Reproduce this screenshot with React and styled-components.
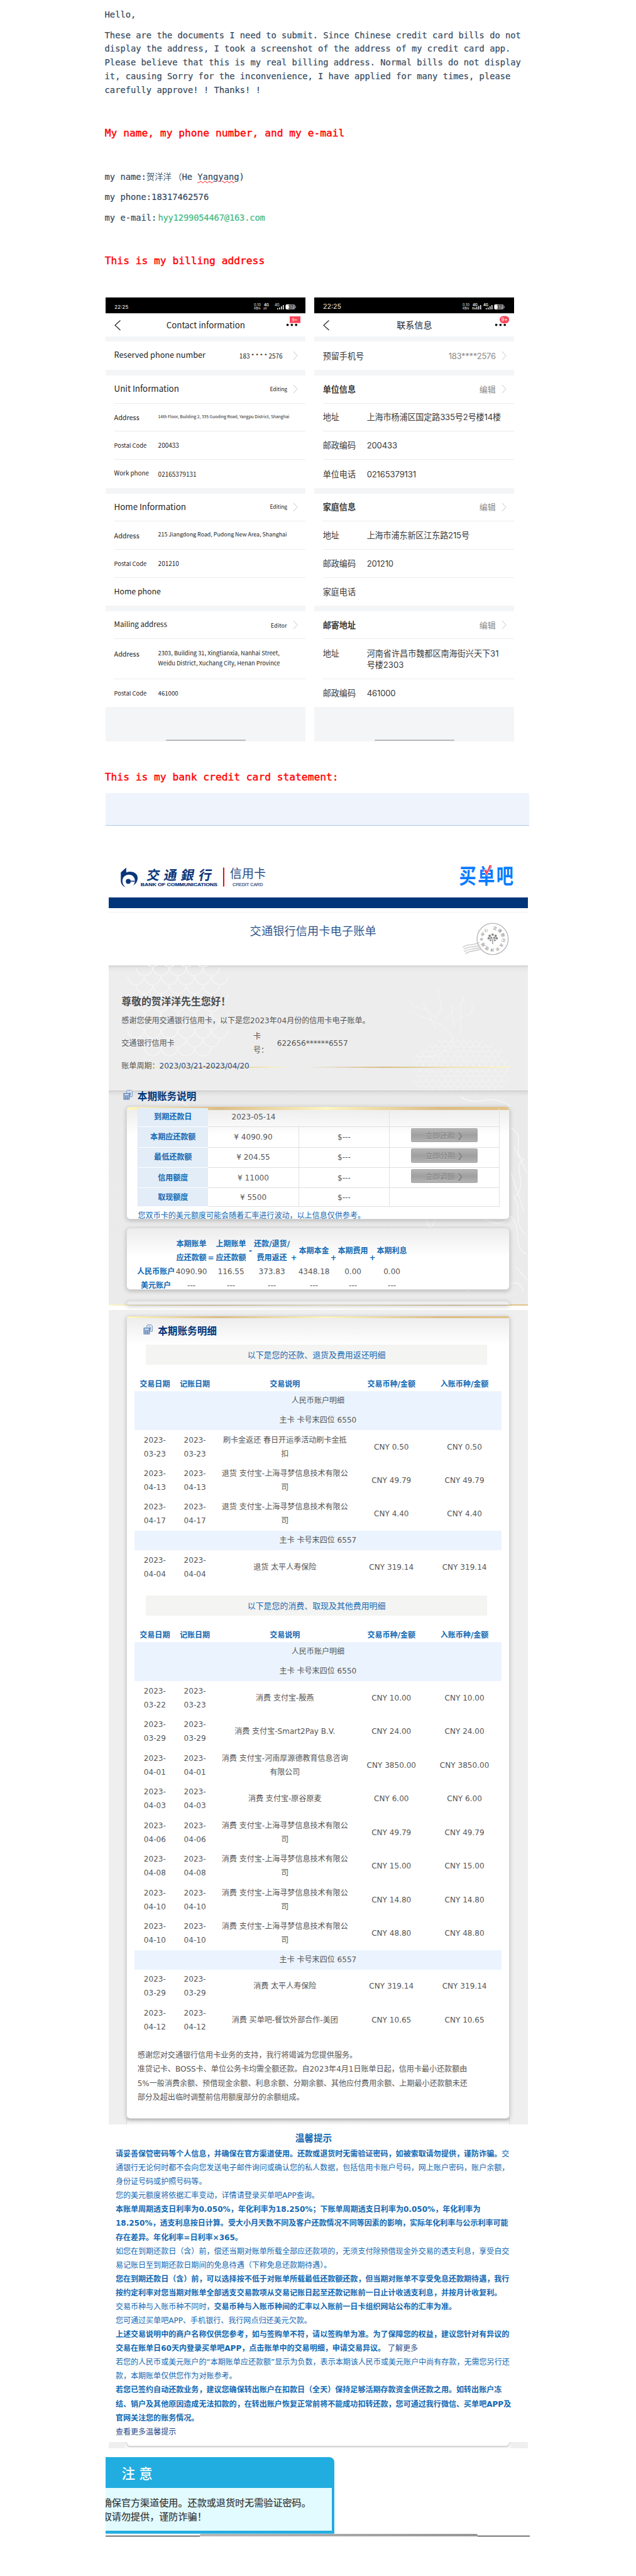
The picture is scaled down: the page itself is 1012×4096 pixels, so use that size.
import React from "react";
import styled, { createGlobalStyle } from "styled-components";

const mono = `"DejaVu Sans Mono", "Noto Sans CJK SC", monospace`;
const sc = `"Noto Sans CJK SC", sans-serif`;
const inter = `Inter, "Noto Sans CJK SC", sans-serif`;
const bankFont = `"DejaVu Sans", "Noto Sans CJK SC", sans-serif`;
const gold = "linear-gradient(90deg,#fdf6c4 0%,#dcbc84 24%,#fbf4c3 52%,#dcbc84 82%,#e3c488 100%)";

const Global = createGlobalStyle`
  * { box-sizing: border-box; }
  body { margin: 0; background: #fff; }
`;

const Page = styled.main`
  width: 1012px;
  height: 4096px;
  overflow: hidden;
  background: #fff;
  padding-top: 12.9px;
`;

/* ---------- letter ---------- */
const Letter = styled.p`
  margin: ${(p) => p.$gap || 0}px 0 0 166.6px;
  font: 13.75px/21.8px ${mono};
  color: #34495e;
  white-space: pre;
  -webkit-text-stroke: 0.2px #34495e;
`;
const Heading = styled.h2`
  margin: ${(p) => p.$gap}px 0 0 166.8px;
  font: 16.25px/24px ${mono};
  color: #ff0000;
  white-space: pre;
  -webkit-text-stroke: 0.4px #ff0000;
`;
const Hanzi = styled.span`
  font-family: ${sc};
  font-size: 13.4px;
  font-weight: 350;
  -webkit-text-stroke: 0;
`;
const Misspelt = styled.span`
  text-decoration: underline wavy #f00 1px;
  text-underline-offset: 1px;
`;
const Mail = styled.span`
  margin-left: 2px;
  color: #42b983;
  letter-spacing: -0.17px;
  -webkit-text-stroke: 0.2px #42b983;
`;

/* ---------- phones ---------- */
const Phones = styled.div`
  display: flex;
  gap: 14.3px;
  margin: 45.9px 0 0 168.4px;
`;
const Phone = styled.section`
  width: 317.8px;
  height: 706.4px;
  background: #fff;
  color: ${(p) => (p.$cn ? "#3a3a3a" : "#1c1c1c")};
  font-family: ${(p) => (p.$cn ? inter : sc)};
`;
const StatusBar = styled.div`
  height: 24.6px;
  background: #000;
  color: #eee;
  display: flex;
  align-items: center;
  justify-content: space-between;
  padding: 6px 14px 0 13.5px;
  font: ${(p) => p.$size}px/14px Inter, sans-serif;
`;
const StatusIcons = styled.div`
  display: flex;
  align-items: center;
  svg { display: block; }
`;
const NavBar = styled.div`
  height: 37.4px;
  display: grid;
  grid-template-columns: 60px 1fr 60px;
  align-items: center;
  justify-items: center;
  border-top: 0.6px solid #ddd;
`;
const NavTitle = styled.div`
  font-size: ${(p) => p.$size}px;
  line-height: 20px;
  color: #222;
  white-space: nowrap;
`;
const NavIcon = styled.svg`
  justify-self: ${(p) => p.$side};
  display: block;
`;
const Gap = styled.div`
  height: ${(p) => p.$h}px;
  background: #f4f5f7;
  display: flex;
  align-items: flex-end;
  justify-content: center;
`;
const HomeBar = styled.div`
  width: 127px;
  height: 2.8px;
  margin-bottom: 0.7px;
  border-radius: 2px;
  background: #bababa;
`;
const Row = styled.div`
  height: ${(p) => p.$h}px;
  margin-left: 13.2px;
  border-bottom: ${(p) => (p.$line ? "1px solid #ececec" : "0")};
  display: flex;
  align-items: ${(p) => (p.$top ? "flex-start" : "center")};
  padding: ${(p) => (p.$top ? 9.5 : 0)}px 12.6px 0 0;
`;
const Label = styled.div`
  font-size: ${(p) => p.$size}px;
  font-weight: ${(p) => (p.$bold ? 700 : 400)};
  line-height: 18px;
  margin-top: ${(p) => p.$dy || 0}px;
  width: ${(p) => (p.$wide ? "auto" : "70px")};
  flex: ${(p) => (p.$wide ? 1 : "none")};
  white-space: nowrap;
`;
const Value = styled.div`
  font-size: ${(p) => p.$size}px;
  line-height: ${(p) => p.$lh || 18}px;
  margin-top: ${(p) => p.$dy || 0}px;
  letter-spacing: ${(p) => p.$ls || 0}px;
  white-space: pre;
`;
const Action = styled(Value)`
  color: ${(p) => (p.$cn ? "#8a8a8a" : "#1c1c1c")};
  margin-right: ${(p) => p.$mr}px;
`;

const Chevron = () => (
  <svg width="8" height="15" viewBox="0 0 8 15" fill="none" stroke="#c4c4c4" strokeWidth="1">
    <path d="M1 1L7 7.5L1 14" />
  </svg>
);

const Status = ({ cn }) => (
  <StatusBar $size={cn ? 10.6 : 8.2}>
    <span>22:25</span>
    <StatusIcons>
      <svg width="68" height="14" viewBox="0 0 68 14" fill="#e8e8e8" fontFamily="Inter, sans-serif">
        <text x="0" y="5.5" fontSize="5.6" textLength="11">0.10</text>
        <text x="0" y="11" fontSize="5" textLength="10.5">KB/s</text>
        <text x="16" y="5.8" fontSize="5.6" fontWeight="700">4G</text>
        {cn ? (
          <g>
            <rect x="16" y="7" width="1.4" height="4" /><rect x="19" y="8" width="1.6" height="3" />
            <rect x="22" y="7" width="1.6" height="4" /><rect x="25" y="5.5" width="1.6" height="5.5" />
            <rect x="28" y="4" width="1.6" height="7" />
          </g>
        ) : (
          <text x="15" y="11" fontSize="5">oll</text>
        )}
        <text x="33" y="5.8" fontSize="5.6" fontWeight={cn ? 700 : 400}>4G</text>
        <rect x="37" y="9" width="1.6" height="2" /><rect x="40" y="8" width="1.6" height="3" />
        <rect x="43" y="6" width="1.6" height="5" /><rect x="46" y="4" width="1.6" height="7" />
        <rect x="50.5" y="3" width="15" height="8" rx="2" fill="#8c8c8c" />
        <path d="M52.5 3H56V11H52.5Q50.5 11 50.5 9V5Q50.5 3 52.5 3Z" fill="#fff" />
        <rect x="66" y="5.2" width="1" height="3.6" rx=".5" fill="#8c8c8c" />
        <text x="54" y="9.6" fontSize="7" fontWeight="600" fill="#333">37</text>
      </svg>
    </StatusIcons>
  </StatusBar>
);

const Nav = ({ cn, title, size }) => (
  <NavBar>
    <NavIcon $side="start" width="25" height="20" viewBox="0 0 25 20" fill="none" stroke="#222" strokeWidth="1.2">
      <path d="M23.5 2.5L15 10.2L23.5 18" />
    </NavIcon>
    <NavTitle $size={size}>{title}</NavTitle>
    <NavIcon $side="end" width="32" height="32" viewBox="0 0 32 32">
      <g fill="#111">
        <circle cx="3.6" cy="15.6" r="1.9" /><circle cx="10.4" cy="15.6" r="1.9" /><circle cx="17.2" cy="15.6" r="1.9" />
      </g>
      {cn ? <rect x="9" y="1.6" width="15.2" height="11.4" rx="5.7" fill="#fb4459" /> : <rect x="7" y="2" width="17" height="10.6" fill="#fb4459" />}
      <text x={cn ? 11.6 : 10.6} y="9.8" fontSize={cn ? 8 : 6.6} fill="#fff" fontFamily="Inter, sans-serif">9+</text>
    </NavIcon>
  </NavBar>
);

const EnglishPhone = () => (
  <Phone>
    <Status />
    <Nav title="Contact information" size={13.3} />
    <Gap $h={8.6} />
    <Row $h={44.6}>
      <Label $wide $size={12.7} $dy={-3}>Reserved phone number</Label>
      <Action $size={10} $mr={16}>183 * * * * 2576</Action><Chevron />
    </Row>
    <Gap $h={9} />
    <Row $h={44.6} $line>
      <Label $wide $size={13.3} $dy={-1}>Unit Information</Label>
      <Action $size={8.4} $dy={-2} $mr={8.5}>Editing</Action><Chevron />
    </Row>
    <Row $h={44.6} $line><Label $size={10.8} $dy={-1}>Address</Label><Value $size={6.7} $dy={-3}>14th Floor, Building 2, 335 Guoding Road, Yangpu District, Shanghai</Value></Row>
    <Row $h={45} $line><Label $size={9.4}>Postal Code</Label><Value $size={10}>200433</Value></Row>
    <Row $h={44.9}><Label $size={9.8} $dy={-4}>Work phone</Label><Value $size={10}>02165379131</Value></Row>
    <Gap $h={8.7} />
    <Row $h={44.3} $line>
      <Label $wide $size={13.3} $dy={-1}>Home Information</Label>
      <Action $size={8.4} $dy={-2} $mr={8.5}>Editing</Action><Chevron />
    </Row>
    <Row $h={45.2} $line><Label $size={10.8}>Address</Label><Value $size={8.9} $dy={-2}>215 Jiangdong Road, Pudong New Area, Shanghai</Value></Row>
    <Row $h={44.9} $line><Label $size={9.4}>Postal Code</Label><Value $size={10}>201210</Value></Row>
    <Row $h={43.7}><Label $size={12.3} $dy={-3}>Home phone</Label></Row>
    <Gap $h={9.2} />
    <Row $h={44.3} $line>
      <Label $wide $size={11.6} $dy={-4}>Mailing address</Label>
      <Action $size={9.1} $mr={9}>Editor</Action><Chevron />
    </Row>
    <Row $h={63.8} $line $top>
      <Label $size={10.8} $dy={4}>Address</Label>
      <Value $size={9.3} $lh={15.7} $dy={5}>{"2303, Building 31, Xingtianxia, Nanhai Street,\nWeidu District, Xuchang City, Henan Province"}</Value>
    </Row>
    <Row $h={44.3}><Label $size={9.4}>Postal Code</Label><Value $size={9.6}>461000</Value></Row>
    <Gap $h={54.7}><HomeBar /></Gap>
  </Phone>
);

const ChineseRow = ({ h, label, value, line }) => (
  <Row $h={h} $line={line}><Label $size={13.1}>{label}</Label><Value $size={13.1} $ls={-0.15}>{value}</Value></Row>
);
const ChineseHead = ({ h, label }) => (
  <Row $h={h} $line>
    <Label $wide $bold $size={13.1}>{label}</Label>
    <Action $cn $size={13} $mr={9}>编辑</Action><Chevron />
  </Row>
);

const ChinesePhone = () => (
  <Phone $cn>
    <Status cn />
    <Nav cn title="联系信息" size={14.1} />
    <Gap $h={8.6} />
    <Row $h={44.6}>
      <Label $wide $size={13.1}>预留手机号</Label>
      <Action $cn $size={13} $ls={-0.3} $mr={9}>183****2576</Action><Chevron />
    </Row>
    <Gap $h={9} />
    <ChineseHead h={44.6} label="单位信息" />
    <ChineseRow h={44.6} line label="地址" value="上海市杨浦区国定路335号2号楼14楼" />
    <ChineseRow h={45} line label="邮政编码" value="200433" />
    <ChineseRow h={44.9} label="单位电话" value="02165379131" />
    <Gap $h={8.7} />
    <ChineseHead h={44.3} label="家庭信息" />
    <ChineseRow h={45.2} line label="地址" value="上海市浦东新区江东路215号" />
    <ChineseRow h={44.9} line label="邮政编码" value="201210" />
    <ChineseRow h={43.7} label="家庭电话" />
    <Gap $h={9.2} />
    <ChineseHead h={44.3} label="邮寄地址" />
    <Row $h={63.8} $line $top>
      <Label $size={13.1} $dy={4}>地址</Label>
      <Value $size={13.1} $lh={18.6} $dy={3.7}>{"河南省许昌市魏都区南海街兴天下31\n号楼2303"}</Value>
    </Row>
    <ChineseRow h={44.3} label="邮政编码" value="461000" />
    <Gap $h={54.7}><HomeBar /></Gap>
  </Phone>
);

/* ---------- statement ---------- */
const BlueStrip = styled.div`
  margin: 13.1px 0 0 168.4px;
  width: 674px;
  height: 51.4px;
  background: #eff4fc;
  border-bottom: 1px solid #a9cbeb;
`;
const Statement = styled.article`
  margin-left: 172.8px;
  width: 667.6px;
  font: 12.05px/22px ${bankFont};
  color: #555;
`;
const LogoBar = styled.header`
  height: 114.2px;
  display: flex;
  justify-content: space-between;
  padding: 50.3px 22.4px 0 11.7px;
`;
const BankMark = styled.svg`
  margin-top: 10.3px;
`;
const BlueBar = styled.div`
  height: 16.6px;
  background: #00357a;
`;
const HairGap = styled.div`
  height: 7.2px;
  border-bottom: 1.4px solid #f0f0f0;
`;
const TitleRow = styled.div`
  height: 83.8px;
  display: flex;
  justify-content: space-between;
`;
const Title = styled.h1`
  margin: 17.5px 0 0 224.8px;
  font: 18.2px/23px ${sc};
  letter-spacing: 0.1px;
  font-weight: 350;
  color: #1e4a86;
`;
const Stamp = styled.svg`
  margin: 15.5px 28.8px 0 0;
`;
const Greeting = styled.section`
  position: relative;
  height: 199.5px;
  padding: 45.7px 0 0 20.5px;
  background: linear-gradient(#d2d2d2 0, #e6e6e6 4px, #ededed 11px);
`;
const Watermark = styled.svg`
  position: absolute;
  left: 0;
  top: 0;
  pointer-events: none;
`;
const GoldRule = styled.div`
  position: absolute;
  left: 20px;
  right: 29px;
  top: 161px;
  height: 2.6px;
  display: flex;
  gap: 22px;
  &::before, &::after {
    content: "";
    flex: 264;
    background: linear-gradient(90deg, #f7f0c600, #f5eec2 20%, #dcc088 55%, #f5eec2 88%, #f7f0c600);
  }
  &::after { flex: 310; background: linear-gradient(90deg, #f7f0c600, #d9bb80 38%, #f0e2ae 70%, #fbf5c6); }
`;
const Dear = styled.h2`
  position: relative;
  margin: 0;
  font: 700 15.8px/24px ${sc};
  color: #4c4c4c;
`;
const Line = styled.div`
  position: relative;
  display: flex;
  align-items: center;
  height: ${(p) => p.$h || 22}px;
  margin-top: ${(p) => p.$gap}px;
  white-space: nowrap;
`;
const CardName = styled.span`
  width: 209.6px;
`;
const CardLabel = styled.span`
  width: 37.9px;
  white-space: pre;
`;
const Period = styled.span`
  color: #1f4a8a;
`;

const Overview = styled.section`
  position: relative;
  height: 339.9px;
  padding-left: 29.4px;
  background: linear-gradient(#c6c6c6 0, #dcdcdc 2px, #eaeaea 9px, #ebebeb);
`;
const SectionTitle = styled.h3`
  position: relative;
  display: flex;
  align-items: center;
  gap: 8px;
  height: 22px;
  margin: 0 0 0 ${(p) => p.$left}px;
  font: 700 15.6px/22px ${sc};
  color: #00357a;
  top: ${(p) => p.$shift || 0}px;
`;
const Card = styled.div`
  position: relative;
  width: 607.9px;
  height: ${(p) => p.$h}px;
  margin-top: ${(p) => p.$gap}px;
  border-radius: ${(p) => (p.$open ? "5px 5px 0 0" : "5px")};
  background: linear-gradient(#ececec, #fff ${(p) => p.$fade || 45}px);
  box-shadow: 0 0 0 1px #d9d9d9, 0 2px 7px 1px rgba(0, 0, 0, 0.22);
  overflow: hidden;
`;
const GoldStrip = styled.div`
  height: ${(p) => p.$h}px;
  background: ${gold};
`;
const Quota = styled.div`
  display: grid;
  grid-template-columns: 111.1px 145.4px 143.6px 174.8px;
  grid-template-rows: 30.2px 32.5px 32.7px 31.7px 30.5px;
  margin: -2.8px 0 0 16.5px;
  width: 575px;
  border-left: 1px solid #dfe6ee;
`;
const QuotaName = styled.div`
  background: #e2edf8;
  color: #1168b3;
  font-weight: 700;
  display: grid;
  place-items: center;
  border-bottom: 1px solid #fff;
`;
const QuotaCell = styled.div`
  display: grid;
  place-items: ${(p) => (p.$action ? "start center" : "center")};
  padding-top: ${(p) => (p.$action ? 1.5 : 0)}px;
  border-right: ${(p) => (p.$bare ? 0 : 1)}px solid #e2e2e6;
  border-bottom: 1px solid #dedfe3;
`;
const PayButton = styled.button`
  width: 106.2px;
  height: 22.6px;
  padding: 0;
  border: 1px solid #a6a6a6;
  border-radius: 2px;
  background: linear-gradient(#b4b4b4, #9f9f9f 50%, #b2b2b2);
  color: #858585;
  font: 500 11.8px/20px ${sc};
  text-shadow: 0 1px 0 #c2c2c2;
`;
const QuotaNote = styled.div`
  margin: 2.2px 0 0 17.4px;
  color: #1168b3;
  line-height: 22px;
  height: 16px;
  white-space: nowrap;
`;
const Sum = styled.div`
  display: grid;
  grid-template-columns: 59px 54px 8px 56px 6px 62px 8px 56px 6px 56px 6px 56px;
  margin: ${(p) => p.$mt || 0}px 0 0 16.4px;
  align-items: center;
  justify-items: center;
  white-space: nowrap;
`;
const Blue = styled.div`
  color: #1168b3;
  font-weight: 700;
  text-align: center;
  white-space: pre;
  margin-top: ${(p) => p.$dy || 0}px;
`;
const Seam = styled.div`
  height: 9.2px;
  background: #fff;
`;

const Detail = styled.section`
  height: 1294.7px;
  background: #efefef;
  padding: 9.6px 0 0 29.4px;
  overflow: hidden;
`;
const DetailCard = styled(Card)`
  overflow: visible;
  border-radius: 3px 3px 5px 5px;
  padding-left: 12.1px;
`;
const CardGold = styled(GoldStrip)`
  margin-left: -12.1px;
  border-radius: 3px 3px 0 0;
`;
const Foot = styled.div`
  width: 607.9px;
  height: 12px;
  background: linear-gradient(#d4d4d4, #f3f3f3 6px, #fafafa);
  box-shadow: 0 0 0 1px #d9d9d9;
`;
const Banner = styled.div`
  width: 542.3px;
  height: 31.3px;
  margin: ${(p) => p.$gap}px 0 0 18.2px;
  background: #f4f4f2;
  color: #1b6ab3;
  font: 12.93px/31.3px ${sc};
  text-align: center;
`;
const TxRow = styled.div`
  display: grid;
  grid-template-columns: 64.2px 63.2px 223.2px 115.8px 116.9px;
  width: 583.3px;
  height: ${(p) => p.$h || 53.48}px;
  align-items: center;
  text-align: center;
  white-space: pre;
`;
const TxHead = styled(TxRow)`
  color: #1168b3;
  font-weight: 700;
  margin-top: ${(p) => p.$gap}px;
`;
const Band = styled.div`
  width: 583.3px;
  background: #ebf4fe;
  text-align: center;
  line-height: 31px;
`;
const Closing = styled.p`
  margin: 18.6px 0 0 4.4px;
  line-height: 22.15px;
  white-space: pre;
`;

const Tips = styled.section`
  padding: 9.2px 0 0 11.1px;
  height: 505px;
  color: #1168b3;
  line-height: 22.085px;
  white-space: nowrap;
`;
const TipsTitle = styled.h3`
  margin: 0 0 3px;
  width: 630px;
  text-align: center;
  font: 700 14.6px/24px ${sc};
`;
const Bold = styled.b`
  font-weight: 700;
`;
const More = styled.span`
  color: #1f4a8a;
`;
const Slice = styled.div`
  height: 9.9px;
  background: #efefef;
  padding-left: 29.4px;
  overflow: hidden;
`;
const SliceCard = styled.div`
  width: 607.9px;
  height: 6.5px;
  background: #fff;
  border-radius: 0 0 5px 5px;
  box-shadow: 0 1px 2px 1px #cfcfcf, 0 6px 0 3px #f8f8f8;
`;
const Notice = styled.aside`
  margin: 14.5px 0 0 168.3px;
  width: 363.9px;
  height: 121.9px;
  background: #22ade0;
  border-radius: 0 8px 0 0;
  border-bottom: 1px solid #5fc4ea;
  padding-right: 4.4px;
  overflow: hidden;
`;
const NoticeTitle = styled.h3`
  margin: 0;
  height: 49.2px;
  padding-left: 25.2px;
  font: 500 21.5px/50px ${sc};
  color: #fff;
  word-spacing: 1.5px;
`;
const NoticeBody = styled.p`
  margin: 0;
  height: 67.8px;
  padding-top: 11.8px;
  background: #e2fbff;
  color: #333;
  font: 15.1px/21.4px ${sc};
  text-indent: -5.6px;
  white-space: nowrap;
  -webkit-text-stroke: 0.2px #333;
`;
const NoticeLine = styled.span`
  display: block;
`;
const ScrollTrack = styled.div`
  margin-left: 168.3px;
  width: 674.8px;
  height: 3.6px;
  border-bottom: 1.2px solid #000;
  padding-left: 149.9px;
`;
const ScrollThumb = styled.div`
  width: 441.5px;
  height: 3.6px;
  border-radius: 2px 2px 0 0;
  background: linear-gradient(90deg, #b8b8b8, #969696);
`;

const BankLogo = () => (
  <BankMark width="259" height="48.56" viewBox="0 0 1200 225" fill="#0a3579">
    <path d="M38 66L78 30V66C118 50 162 68 162 106C162 132 150 150 130 162C142 144 143 130 141 118C137 96 120 82 98 82C70 82 50 102 50 127C50 150 60 165 76 175C50 167 38 150 38 125Z" />
    <circle cx="93" cy="132" r="18" />
    <rect x="93" y="127" width="48" height="7" />
    <g fontFamily={sc} fontSize="96" fontWeight="700" transform="translate(28 0) skewX(-10)">
      <text x="218" y="120">交</text><text x="344" y="120">通</text><text x="470" y="120">銀</text><text x="600" y="120">行</text>
    </g>
    <text x="184" y="168" fontFamily="Liberation Sans, sans-serif" fontWeight="700" fontSize="34" textLength="566" lengthAdjust="spacingAndGlyphs" stroke="#0a3579">BANK OF COMMUNICATIONS</text>
    <rect x="792" y="30" width="9" height="140" fill="#e60012" />
    <text x="842" y="108" fontFamily={sc} fontSize="88" fill="#2a4a80" textLength="266">信用卡</text>
    <text x="862" y="168" fontFamily="Liberation Sans, sans-serif" fontSize="34" fill="#2a4a80" textLength="224" lengthAdjust="spacingAndGlyphs" stroke="#2a4a80">CREDIT CARD</text>
  </BankMark>
);

const AppLogo = () => (
  <svg width="88.5" height="60.4" viewBox="20 -5 410 280">
    <g fontFamily={sc} fontWeight="700" fill="#0a7cff">
      <text transform="translate(22 190) scale(.82 1)" fontSize="154">买</text>
      <text transform="translate(160 190) scale(.82 1)" fontSize="154">单</text>
      <text transform="translate(297 190) scale(.82 1)" fontSize="154">吧</text>
    </g>
    <path d="M202 90L222 86L228 96L245 52H266L226 128Z" fill="#fb4459" stroke="#fff" strokeWidth="3" />
  </svg>
);

const PostStamp = () => (
  <Stamp width="75.5" height="54" viewBox="50 460 350 250" fill="none" stroke="#b5b5b5">
    <circle cx="272" cy="585" r="115" strokeWidth="6" />
    <g strokeWidth="6" stroke="#c6c6c6">
      <path d="M52 648C85 615 120 640 175 610" /><path d="M58 664C90 632 130 655 182 628" />
      <path d="M64 680C96 648 138 668 188 644" /><path d="M72 696C100 664 145 682 192 656" />
    </g>
    <path id="ring" d="M272 515A70 70 0 1 1 271 515" stroke="none" />
    <text fontFamily={sc} fontSize="29" fill="#777" stroke="none" letterSpacing="5.5">
      <textPath href="#ring" startOffset="0">交通银行太平洋信用卡中心</textPath>
    </text>
    <g fill="#8a8a8a" stroke="none">
      <circle cx="250" cy="562" r="9" /><circle cx="272" cy="553" r="9" /><circle cx="294" cy="562" r="9" />
      <circle cx="243" cy="580" r="9" /><circle cx="262" cy="577" r="8" /><circle cx="284" cy="577" r="8" />
      <circle cx="302" cy="580" r="9" /><circle cx="257" cy="594" r="7" /><circle cx="288" cy="594" r="7" />
      <rect x="269" y="585" width="6" height="38" />
    </g>
  </Stamp>
);

const Ledger = () => (
  <svg width="14.8" height="16.4" viewBox="0 0 33 36">
    <path d="M15 1H28L32 5V24H24V12H13V4Z" fill="#e8eef7" stroke="#5d82b5" strokeWidth="2" />
    <path d="M21 5V9M26 8V18" stroke="#5d82b5" strokeWidth="2" />
    <rect x="1" y="11" width="22" height="24" rx="1.5" fill="#5d82b5" />
    <rect x="4" y="14" width="16" height="5" fill="#dbe6f4" />
    <path d="M4 23H20M4 27.5H20M4 32H20" stroke="#dbe6f4" strokeWidth="2.6" strokeDasharray="3.4 2.9" />
  </svg>
);

const scales = (cx, cy, rx, ry, cols, rows) => {
  const out = [];
  for (let r = 0; r < rows; r++) {
    for (let c = 0; c < cols; c++) {
      const u = ((c + (r % 2) / 2) / cols) * 2 - 1;
      const v = (r / rows) * 2 - 1;
      if (u * u + v * v < 1) out.push([cx + u * rx, cy + v * ry]);
    }
  }
  return out;
};
const Scales = ({ points, r }) => points.map(([x, y], i) => (
  <path key={i} d={`M${x - r} ${y}A${r} ${r} 0 0 0 ${x + r} ${y}`} />
));

const TxTitle = ({ gap }) => (
  <TxHead $h={22} $gap={gap}>
    <span>交易日期</span><span>记账日期</span><span>交易说明</span><span>交易币种/金额</span><span>入账币种/金额</span>
  </TxHead>
);
const split = (d) => `2023-\n${d}`;
const Tx = ({ on, booked, text, amount }) => (
  <TxRow>
    <span>{split(on)}</span><span>{split(booked || on)}</span><span>{text}</span>
    <span>CNY {amount}</span><span>CNY {amount}</span>
  </TxRow>
);

const refunds = [
  { on: "03-23", text: "刷卡金返还 春日开运季活动刷卡金抵\n扣", amount: "0.50" },
  { on: "04-13", text: "退货 支付宝-上海寻梦信息技术有限公\n司", amount: "49.79" },
  { on: "04-17", text: "退货 支付宝-上海寻梦信息技术有限公\n司", amount: "4.40" },
];
const xunmeng = "消费 支付宝-上海寻梦信息技术有限公\n司";
const purchases = [
  { on: "03-22", booked: "03-23", text: "消费 支付宝-殷燕", amount: "10.00" },
  { on: "03-29", text: "消费 支付宝-Smart2Pay B.V.", amount: "24.00" },
  { on: "04-01", text: "消费 支付宝-河南厚源德教育信息咨询\n有限公司", amount: "3850.00" },
  { on: "04-03", text: "消费 支付宝-原谷原麦", amount: "6.00" },
  { on: "04-06", text: xunmeng, amount: "49.79" },
  { on: "04-08", text: xunmeng, amount: "15.00" },
  { on: "04-10", text: xunmeng, amount: "14.80" },
  { on: "04-10", text: xunmeng, amount: "48.80" },
];

const quotas = [
  ["本期应还款额", "¥ 4090.90", "立即还款"],
  ["最低还款额", "¥ 204.55", "立即分期"],
  ["信用额度", "¥ 11000", "立即调额"],
  ["取现额度", "¥ 5500", null],
];

const tips = [
  [["b", "请妥善保管密码等个人信息，并确保在官方渠道使用。还款或退货时无需验证密码，如被索取请勿提供，谨防诈骗。"], ["n", "交"]],
  [["n", "通银行无论何时都不会向您发送电子邮件询问或确认您的私人数据，包括信用卡账户号码，网上账户密码，账户余额，"]],
  [["n", "身份证号码或护照号码等。"]],
  [["n", "您的美元额度将依据汇率变动，详情请登录买单吧APP查询。"]],
  [["b", "本账单周期透支日利率为0.050%，年化利率为18.250%；下账单周期透支日利率为0.050%，年化利率为"]],
  [["b", "18.250%，透支利息按日计算。受大小月天数不同及客户还款情况不同等因素的影响，实际年化利率与公示利率可能"]],
  [["b", "存在差异。年化利率=日利率×365。"]],
  [["n", "如您在到期还款日（含）前，偿还当期对账单所载全部应还款项的，无须支付除预借现金外交易的透支利息，享受自交"]],
  [["n", "易记账日至到期还款日期间的免息待遇（下称免息还款期待遇）。"]],
  [["b", "您在到期还款日（含）前，可以选择按不低于对账单所载最低还款额还款，但当期对账单不享受免息还款期待遇，我行"]],
  [["b", "按约定利率对您当期对账单全部透支交易款项从交易记账日起至还款记账前一日止计收透支利息，并按月计收复利。"]],
  [["n", "交易币种与入账币种不同时，"], ["b", "交易币种与入账币种间的汇率以入账前一日卡组织网站公布的汇率为准。"]],
  [["n", "您可通过买单吧APP、手机银行、我行网点归还美元欠款。"]],
  [["b", "上述交易说明中的商户名称仅供您参考，如与签购单不符，请以签购单为准。为了保障您的权益，建议您针对有异议的"]],
  [["b", "交易在账单日60天内登录买单吧APP，点击账单中的交易明细，申请交易异议。"], ["m", " 了解更多"]],
  [["n", "若您的人民币或美元账户的“本期账单应还款额”显示为负数，表示本期该人民币或美元账户中尚有存款，无需您另行还"]],
  [["n", "款，本期账单仅供您作为对账参考。"]],
  [["b", "若您已签约自动还款业务，建议您确保转出账户在扣款日（全天）保持足够活期存款资金供还款之用。如转出账户冻"]],
  [["b", "结、销户及其他原因造成无法扣款的，在转出账户恢复正常前将不能成功扣转还款，您可通过我行微信、买单吧APP及"]],
  [["b", "官网关注您的账务情况。"]],
  [["m", "查看更多温馨提示"]],
];
const kinds = { b: Bold, m: More, n: "span" };

export default function App() {
  return (
    <Page>
      <Global />
      <Letter>Hello,</Letter>
      <Letter $gap={10.9}>{`These are the documents I need to submit. Since Chinese credit card bills do not
display the address, I took a screenshot of the address of my credit card app.
Please believe that this is my real billing address. Normal bills do not display
it, causing Sorry for the inconvenience, I have applied for many times, please
carefully approve! ! Thanks! !`}</Letter>
      <Heading $gap={45.7}>My name, my phone number, and my e-mail</Heading>
      <Letter $gap={45.3}>my name:<Hanzi>贺洋洋 （</Hanzi>He <Misspelt>Yangyang</Misspelt>)</Letter>
      <Letter $gap={11.1}>my phone:18317462576</Letter>
      <Letter $gap={10.6}>my e-mail:<Mail>hyy1299054467@163.com</Mail></Letter>
      <Heading $gap={45.4}>This is my billing address</Heading>
      <Phones><EnglishPhone /><ChinesePhone /></Phones>
      <Heading $gap={45.1}>This is my bank credit card statement:</Heading>
      <BlueStrip />

      <Statement>
        <LogoBar><BankLogo /><AppLogo /></LogoBar>
        <BlueBar />
        <HairGap />
        <TitleRow><Title>交通银行信用卡电子账单</Title><PostStamp /></TitleRow>
        <Greeting>
          <Watermark width="667" height="199" viewBox="0 0 667 199" fill="none" stroke="#f6f6f6" strokeWidth="1.3">
            <Scales points={scales(110, 60, 80, 85, 6, 12)} r={13} />
            <g strokeWidth="0.9">
              <Scales points={scales(560, 165, 75, 55, 15, 14)} r={5} />
              <path d="M520 85C505 60 490 75 480 58M520 85C540 60 520 50 525 38M535 90C550 60 560 75 565 50M545 95C570 70 580 90 578 62M480 70C500 90 520 80 545 110C560 130 520 150 490 145M500 60L520 100M545 60L550 100M560 60L560 110" />
            </g>
          </Watermark>
          <GoldRule />
          <Dear>尊敬的贺洋洋先生您好！</Dear>
          <Line $gap={7.7}>感谢您使用交通银行信用卡，以下是您2023年04月份的信用卡电子账单。</Line>
          <Line $gap={2.7} $h={44}>
            <CardName>交通银行信用卡</CardName><CardLabel>{"卡\n号："}</CardLabel><span>622656******6557</span>
          </Line>
          <Line $gap={3.7}>账单周期：<Period>2023/03/21-2023/04/20</Period></Line>
        </Greeting>

        <Overview>
          <Watermark width="667" height="339" viewBox="0 0 667 339" fill="none" stroke="#f5f5f5" strokeWidth="1.6">
            <path d="M640 60C665 70 640 100 660 110C640 120 670 150 645 170C660 190 640 210 665 230M500 195L512 220L525 195M560 200C600 190 610 230 640 200C660 220 640 250 665 260M570 320C590 290 600 330 620 300C640 320 650 290 660 320M645 90L665 130M640 130L660 190M648 280L665 300" />
            <path d="M70 15C90 25 110 5 130 30M560 10C590 30 600 0 640 25" />
          </Watermark>
          <SectionTitle $left={-6.2} $shift={-3.5}><Ledger />本期账务说明</SectionTitle>
          <Card $gap={4.3} $h={177.6}>
            <GoldStrip $h={4.2} />
            <Quota>
              <QuotaName>到期还款日</QuotaName>
              <QuotaCell $bare>2023-05-14</QuotaCell><QuotaCell /><QuotaCell />
              {quotas.map(([name, cny, action]) => (
                <React.Fragment key={name}>
                  <QuotaName>{name}</QuotaName>
                  <QuotaCell>{cny}</QuotaCell>
                  <QuotaCell>$---</QuotaCell>
                  <QuotaCell $action>{action && <PayButton>{action} ❯</PayButton>}</QuotaCell>
                </React.Fragment>
              ))}
            </Quota>
            <QuotaNote>您双币卡的美元额度可能会随着汇率进行波动，以上信息仅供参考。</QuotaNote>
          </Card>
          <Card $gap={14.9} $h={97.4}>
            <Sum $mt={13.8}>
              <span />
              <Blue>{"本期账单\n应还款额"}</Blue><Blue $dy={22}>=</Blue>
              <Blue>{"上期账单\n应还款额"}</Blue><Blue>-</Blue>
              <Blue>{"还款/退货/\n费用返还"}</Blue><Blue $dy={22}>+</Blue>
              <Blue>本期本金</Blue><Blue $dy={22}>+</Blue>
              <Blue>本期费用</Blue><Blue $dy={22}>+</Blue>
              <Blue>本期利息</Blue>
            </Sum>
            <Sum>
              <Blue>人民币账户</Blue><span>4090.90</span><i /><span>116.55</span><i /><span>373.83</span><i />
              <span>4348.18</span><i /><span>0.00</span><i /><span>0.00</span>
            </Sum>
            <Sum>
              <Blue>美元账户</Blue><span>---</span><i /><span>---</span><i /><span>---</span><i />
              <span>---</span><i /><span>---</span><i /><span>---</span>
            </Sum>
          </Card>
          <Card $open $gap={19.1} $h={4.5} />
        </Overview>
        <Seam><GoldStrip $h={2.2} /></Seam>

        <Detail>
          <DetailCard $h={1275.6}>
            <CardGold $h={3} />
            <SectionTitle $left={14.2} $shift={7.7}><Ledger />本期账务明细</SectionTitle>
            <Banner $gap={20.4}>以下是您的还款、退货及费用返还明细</Banner>
            <TxTitle gap={20.3} />
            <Band>人民币账户明细<br />主卡 卡号末四位 6550</Band>
            {refunds.map((t) => <Tx key={t.on} {...t} />)}
            <Band>主卡 卡号末四位 6557</Band>
            <Tx on="04-04" text="退货 太平人寿保险" amount="319.14" />
            <Banner $gap={18.7}>以下是您的消费、取现及其他费用明细</Banner>
            <TxTitle gap={20.3} />
            <Band>人民币账户明细<br />主卡 卡号末四位 6550</Band>
            {purchases.map((t, i) => <Tx key={i} {...t} />)}
            <Band>主卡 卡号末四位 6557</Band>
            <Tx on="03-29" text="消费 太平人寿保险" amount="319.14" />
            <Tx on="04-12" text="消费 买单吧-餐饮外部合作-美团" amount="10.65" />
            <Closing>{`感谢您对交通银行信用卡业务的支持，我行将竭诚为您提供服务。
准贷记卡、BOSS卡、单位公务卡均需全额还款。自2023年4月1日账单日起，信用卡最小还款额由
5%一般消费余额、预借现金余额、利息余额、分期余额、其他应付费用余额、上期最小还款额未还
部分及超出临时调整前信用额度部分的余额组成。`}</Closing>
          </DetailCard>
          <Foot />
        </Detail>

        <Tips>
          <TipsTitle>温馨提示</TipsTitle>
          {tips.map((line, i) => (
            <div key={i}>
              {line.map(([kind, text], j) => {
                const Part = kinds[kind];
                return <Part key={j}>{text}</Part>;
              })}
            </div>
          ))}
        </Tips>
        <Slice><SliceCard /></Slice>
      </Statement>

      <Notice>
        <NoticeTitle>注 意</NoticeTitle>
        <NoticeBody>
          <NoticeLine>确保官方渠道使用。还款或退货时无需验证密码。</NoticeLine>
          <NoticeLine>取请勿提供，谨防诈骗！</NoticeLine>
        </NoticeBody>
      </Notice>
      <ScrollTrack><ScrollThumb /></ScrollTrack>
    </Page>
  );
}
